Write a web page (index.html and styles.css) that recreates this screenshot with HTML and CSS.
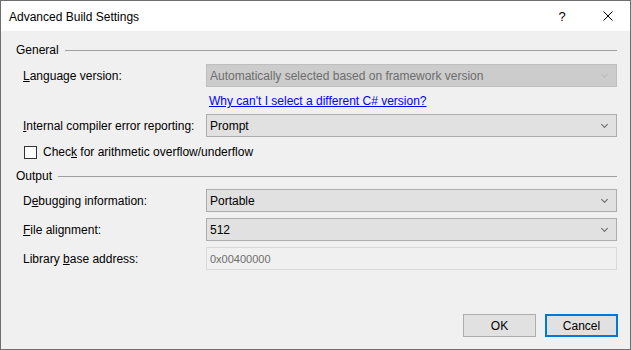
FILE: index.html
```html
<html>
<head>
<title>Advanced Build Settings</title>
<meta charset="UTF-8">
<link rel="stylesheet" href="styles.css">
</head>
<body>
<div class="window">
	<div class="titlebar">
		<span class="title">Advanced Build Settings</span>
		<span class="help">?</span>
		<span class="close"><svg width="10" height="10" viewBox="0 0 10 10"><path d="M0.5 0.5L9.5 9.5M9.5 0.5L0.5 9.5" stroke="#000" stroke-width="1" fill="none"/></svg></span>
	</div>
	<div class="content">
		<div class="group-head"><span>General</span><span class="rule"></span></div>
		<div class="row">
			<span class="label"><u>L</u>anguage version:</span>
			<div class="combo disabled"><span>Automatically selected based on framework version</span><span class="chevron"></span></div>
		</div>
		<div class="row link-row">
			<span class="label"></span>
			<a class="link">Why can't I select a different C# version?</a>
		</div>
		<div class="row">
			<span class="label"><u>I</u>nternal compiler error reporting:</span>
			<div class="combo"><span>Prompt</span><span class="chevron"></span></div>
		</div>
		<div class="check-row">
			<span class="checkbox"></span>
			<span>Chec<u>k</u> for arithmetic overflow/underflow</span>
		</div>
		<div class="group-head output"><span>Output</span><span class="rule"></span></div>
		<div class="row first">
			<span class="label">D<u>e</u>bugging information:</span>
			<div class="combo"><span>Portable</span><span class="chevron"></span></div>
		</div>
		<div class="row">
			<span class="label"><u>F</u>ile alignment:</span>
			<div class="combo"><span>512</span><span class="chevron"></span></div>
		</div>
		<div class="row">
			<span class="label">Library <u>b</u>ase address:</span>
			<div class="textbox">0x00400000</div>
		</div>
	</div>
	<div class="buttons">
		<button class="btn">OK</button>
		<button class="btn default">Cancel</button>
	</div>
</div>
</body>
</html>
```

FILE: styles.css
```css
*{
	margin:0;
	padding:0;
	box-sizing:border-box;
}

body{
	font-family:"Liberation Sans",Arial,sans-serif;
	font-size:12px;
	color:#000;
	background:#f0f0f0;
}

.window{
	width:631px;
	height:350px;
	border:1px solid #6f6f6f;
	background:#f0f0f0;
	display:flex;
	flex-direction:column;
}

.titlebar{
	height:30px;
	background:#fff;
	display:flex;
	align-items:center;
	padding-left:8px;
}
.title{flex:1;margin-top:1px}
.help{width:20px;font-size:13px;margin-right:13px;text-align:center}
.close{width:46px;height:30px;display:flex;align-items:center;justify-content:center;margin-right:-1px}

.content{
	flex:1;
	padding:11px 13px 0 15px;
}

.group-head{
	height:16px;
	display:flex;
	align-items:center;
}
.group-head .rule{
	flex:1;
	height:1px;
	background:#a0a0a0;
	margin-left:6px;
	margin-top:1px;
}
.group-head.output{margin-top:8px}

.row{
	display:flex;
	align-items:center;
	padding-left:7px;
	margin-top:6px;
}
.row.first{margin-top:5px}
.label{width:183px;flex:none}

.combo{
	flex:1;
	height:23px;
	border:1px solid #adadad;
	background:#e1e1e1;
	display:flex;
	align-items:center;
	justify-content:space-between;
	padding:0 9px 0 3px;
}
.combo.disabled{
	background:#cccccc;
	border-color:#bfbfbf;
	color:#6d6d6d;
}
.chevron{
	width:5px;
	height:5px;
	border-right:1px solid #666;
	border-bottom:1px solid #666;
	transform:rotate(45deg);
	margin-top:-3px;
}
.combo.disabled .chevron{border-color:#bcbcbc}

.link-row{margin-top:6px;height:16px}
.link{
	color:#0000ff;
	text-decoration:underline;
	margin-left:3px;
}
.link-row + .row{margin-top:5px}

.check-row{
	display:flex;
	align-items:center;
	padding-left:8px;
	margin-top:7px;
	height:16px;
}
.checkbox{
	width:13px;
	height:13px;
	border:1px solid #333;
	background:#fff;
	margin-right:6px;
}

.textbox{
	flex:1;
	height:23px;
	border:1px solid #d9d9d9;
	background:#f0f0f0;
	color:#6d6d6d;
	font-size:11px;
	display:flex;
	align-items:center;
	padding-left:3px;
}

.buttons{
	display:flex;
	justify-content:flex-end;
	gap:9px;
	padding:0 12px 12px 0;
}
.btn{
	width:73px;
	height:23px;
	border:1px solid #adadad;
	background:#e1e1e1;
	font-family:inherit;
	font-size:12px;
	color:#000;
}
.btn.default{border:2px solid #0078d7}
```
